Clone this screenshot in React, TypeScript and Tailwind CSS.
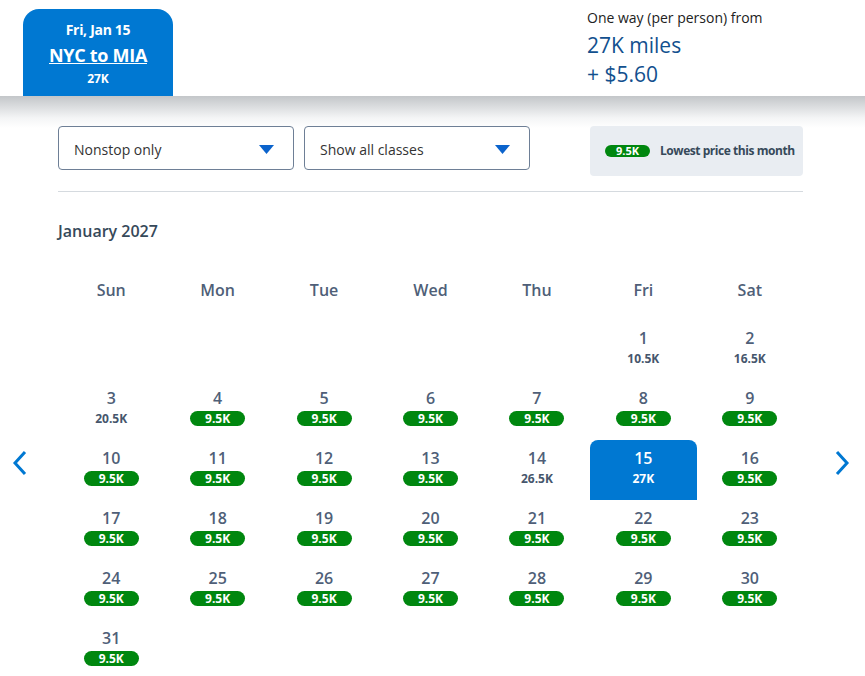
import React from 'react';

type Day = { day: number; price: string; low?: boolean };

const days: Day[] = [
  { day: 1, price: '10.5K' },
  { day: 2, price: '16.5K' },
  { day: 3, price: '20.5K' },
  ...[4, 5, 6, 7, 8, 9, 10, 11, 12, 13].map((d) => ({ day: d, price: '9.5K', low: true })),
  { day: 14, price: '26.5K' },
  { day: 15, price: '27K' },
  ...Array.from({ length: 16 }, (_, i) => ({ day: i + 16, price: '9.5K', low: true })),
];

// January 2027 starts on a Friday
const cells: (Day | null)[] = [null, null, null, null, null, ...days];
const weeks: (Day | null)[][] = [];
for (let i = 0; i < cells.length; i += 7) weeks.push(cells.slice(i, i + 7));

const weekdays = ['Sun', 'Mon', 'Tue', 'Wed', 'Thu', 'Fri', 'Sat'];

const Caret = () => (
  <svg width="15" height="9" viewBox="0 0 15 9">
    <path d="M0 0 H15 L7.5 9 Z" fill="#0b63cc" />
  </svg>
);

const Chevron = ({ dir }: { dir: 'left' | 'right' }) => (
  <svg width="18" height="26" viewBox="0 0 18 26">
    <path
      d={dir === 'left' ? 'M14 2 L4 13 L14 24' : 'M4 2 L14 13 L4 24'}
      fill="none"
      stroke="#0078d2"
      strokeWidth="3"
    />
  </svg>
);

const Select = ({ label, width }: { label: string; width: string }) => (
  <div className={`${width} h-[44px] flex items-center justify-between pl-[15px] pr-[19px] pt-[2px] border border-[#6e7f96] rounded-[4px] text-[14px] text-[#333]`}>
    <span>{label}</span>
    <Caret />
  </div>
);

const Cell = ({ d }: { d: Day | null }) => {
  if (!d) return <div className="h-[60px]" />;
  const selected = d.day === 15;
  return (
    <div
      className={`h-[60px] flex flex-col items-center pt-[6px] ${selected ? 'bg-[#0078d2] rounded-t-[8px]' : ''}`}
    >
      <span className={`text-[16px] leading-[24px] font-semibold ${selected ? 'text-white' : 'text-[#4f5f78]'}`}>
        {d.day}
      </span>
      {d.low ? (
        <span className="mt-[1px] w-[55px] h-[15px] leading-[15px] rounded-full bg-[#00870f] text-white text-[12px] font-bold text-center">
          {d.price}
        </span>
      ) : (
        <span className={`mt-[1px] h-[15px] leading-[15px] text-[12px] font-bold ${selected ? 'text-white' : 'text-[#46566c]'}`}>
          {d.price}
        </span>
      )}
    </div>
  );
};

export default function App() {
  return (
    <div className="w-[865px] h-[676px] bg-white overflow-hidden" style={{ fontFamily: '"Open Sans", "Noto Sans", sans-serif' }}>
      {/* Trip summary header */}
      <div className="h-[96px] flex items-end justify-between pl-[23px] pr-[62px]">
        <div className="w-[150px] h-[87px] bg-[#0078d2] rounded-t-[16px] flex flex-col items-center pt-[11px] text-white">
          <span className="text-[14px] leading-[20px] font-bold tracking-[-0.3px]">Fri, Jan 15</span>
          <span className="text-[18px] leading-[26px] font-bold underline tracking-[-0.3px] mt-[2px]">NYC to MIA</span>
          <span className="text-[12px] leading-[16px] font-bold mt-[3px]">27K</span>
        </div>
        <div className="self-start pt-[8px] w-[216px]">
          <div className="text-[14px] leading-[20px] text-[#222]">One way (per person) from</div>
          <div className="text-[21px] leading-[29px] text-[#12508e] mt-[3px]">27K miles</div>
          <div className="text-[21px] leading-[29px] text-[#12508e]">+ $5.60</div>
        </div>
      </div>

      <div className="bg-[linear-gradient(#c3c6c9,#f4f5f6_22px,#fff_32px)] pt-[30px]">
        <div className="mx-[58px] w-[745px]">
          <div className="flex items-start">
            <Select label="Nonstop only" width="w-[236px]" />
            <div className="w-[10px]" />
            <Select label="Show all classes" width="w-[226px]" />
            <div className="flex-1" />
            <div className="w-[213px] h-[50px] rounded-[4px] bg-[#e9edf2] flex items-center pl-[15px] gap-[10px]">
              <span className="w-[45px] h-[12px] leading-[12px] rounded-full bg-[#00870f] text-white text-[11px] font-bold text-center">
                9.5K
              </span>
              <span className="text-[12px] font-bold text-[#36495a] tracking-[-0.45px]">Lowest price this month</span>
            </div>
          </div>
          <div className="mt-[15px] border-t border-[#d5dadf]" />
          <div className="mt-[28px] text-[16px] leading-[22px] font-semibold text-[#36495a]">January 2027</div>

          <div className="grid grid-cols-7 mt-[36px]">
            {weekdays.map((w) => (
              <div key={w} className="text-center text-[16px] leading-[24px] font-semibold text-[#4f5f78]">
                {w}
              </div>
            ))}
          </div>
        </div>

        <div className="flex items-start mt-[18px]">
          <div className="w-[58px] flex justify-start pl-[11px] pt-[130px]">
            <Chevron dir="left" />
          </div>
          <div className="w-[745px] grid grid-cols-7">
            {weeks.map((wk) => wk.map((d, i) => <Cell key={`${d?.day ?? 'e'}-${i}-${wk[0]?.day}`} d={d} />))}
          </div>
          <div className="flex-1 flex justify-start pl-[30px] pt-[130px]">
            <Chevron dir="right" />
          </div>
        </div>
      </div>
    </div>
  );
}
